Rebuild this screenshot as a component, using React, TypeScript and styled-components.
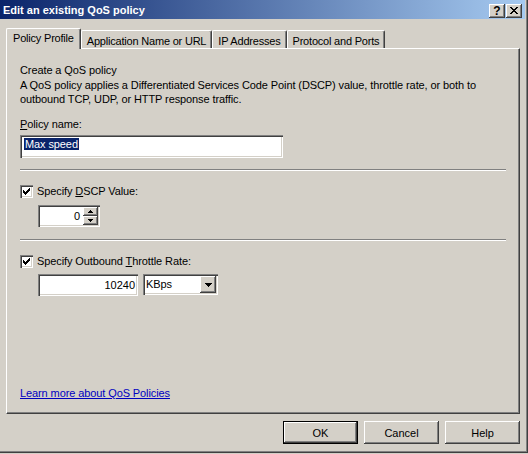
import React from 'react'
import styled, { createGlobalStyle } from 'styled-components'

const GlobalStyle = createGlobalStyle`
  html, body {
    margin: 0;
    padding: 0;
    background: #d4d0c8;
  }
  body {
    font-family: 'Liberation Sans', Arial, sans-serif;
    font-size: 11px;
    color: #000;
  }
`

const raised = `
  box-shadow: inset -1px -1px #404040, inset 1px 1px #ffffff,
    inset -2px -2px #808080, inset 2px 2px #d4d0c8;
`

const sunken = `
  box-shadow: inset 1px 1px #808080, inset 2px 2px #404040,
    inset -1px -1px #ffffff, inset -2px -2px #d4d0c8;
`

const Window = styled.div`
  width: 528px;
  height: 453px;
  box-sizing: border-box;
  padding-right: 3px;
  background: #d4d0c8;
  display: flex;
  flex-direction: column;
  box-shadow: inset -1px -1px #404040, inset -2px -2px #808080;
`

const TitleBar = styled.div`
  height: 19px;
  box-sizing: border-box;
  padding: 2px 3px 0 3px;
  display: flex;
  align-items: center;
  background: linear-gradient(to right, #0a246a, #a6caf0);
`

const Title = styled.div`
  flex: 1;
  color: #fff;
  font-weight: bold;
  line-height: 17px;
`

const CaptionButtons = styled.div`
  display: flex;
  gap: 1px;
`

const CaptionButton = styled.div`
  width: 16px;
  height: 14px;
  display: flex;
  align-items: center;
  justify-content: center;
  background: #d4d0c8;
  font-weight: bold;
  font-size: 12px;
  line-height: 14px;
  ${raised}
`

const Content = styled.div`
  flex: 1;
  display: flex;
  flex-direction: column;
  padding: 9px 5px 0 6px;
`

const TabStrip = styled.div`
  display: flex;
  align-items: flex-end;
  height: 20px;
`

const Tab = styled.div<{ $active?: boolean }>`
  position: relative;
  z-index: ${(p) => (p.$active ? 1 : 0)};
  box-sizing: border-box;
  height: ${(p) => (p.$active ? '21px' : '18px')};
  margin-bottom: ${(p) => (p.$active ? '-1px' : '0')};
  padding: ${(p) => (p.$active ? '2px 6px 0' : '3px 5px 0')};
  line-height: 14px;
  letter-spacing: -0.2px;
  white-space: nowrap;
  background: #d4d0c8;
  border-top: 1px solid #fff;
  border-left: 1px solid #fff;
  border-right: 1px solid #404040;
  border-radius: 2px 2px 0 0;
  box-shadow: inset -1px 0 #808080;
`

const Panel = styled.div`
  flex: 1;
  display: flex;
  flex-direction: column;
  padding: 14px 13px 13px;
  border: 1px solid;
  border-color: #fff #404040 #404040 #fff;
  box-shadow: inset -1px -1px #808080;
  letter-spacing: -0.1px;
`

const Text = styled.div<{ $gap?: number }>`
  line-height: 14px;
  margin-top: ${(p) => p.$gap ?? 0}px;
`

const TextField = styled.div`
  width: 263px;
  height: 23px;
  box-sizing: border-box;
  margin-top: 4px;
  padding: 3px 4px;
  background: #fff;
  line-height: 13px;
  ${sunken}
`

const Selection = styled.span`
  background: #0a246a;
  color: #fff;
  padding: 0 1px;
`

const Separator = styled.div<{ $gap: number }>`
  height: 0;
  margin-top: ${(p) => p.$gap}px;
  border-top: 1px solid #808080;
  border-bottom: 1px solid #fff;
`

const CheckRow = styled.label`
  display: flex;
  align-items: center;
  gap: 4px;
  margin-top: 14px;
  line-height: 13px;
`

const CheckBox = styled.span`
  width: 13px;
  height: 13px;
  box-sizing: border-box;
  display: flex;
  align-items: center;
  justify-content: center;
  background: #fff;
  ${sunken}
`

const Indented = styled.div<{ $gap: number }>`
  display: flex;
  align-items: flex-start;
  gap: 5px;
  margin: ${(p) => p.$gap}px 0 0 18px;
`

const SpinField = styled.div`
  width: 62px;
  height: 22px;
  box-sizing: border-box;
  padding: 2px;
  display: flex;
  background: #fff;
  ${sunken}
`

const FieldValue = styled.div<{ $pad: number }>`
  flex: 1;
  text-align: right;
  padding-right: ${(p) => p.$pad}px;
  line-height: 18px;
  letter-spacing: 0;
`

const SpinButtons = styled.div`
  width: 15px;
  display: flex;
  flex-direction: column;
`

const SpinButton = styled.div`
  flex: 1;
  display: flex;
  align-items: center;
  justify-content: center;
  background: #d4d0c8;
  ${raised}
`

const NumberField = styled.div`
  width: 100px;
  height: 22px;
  box-sizing: border-box;
  padding: 2px;
  display: flex;
  background: #fff;
  ${sunken}
`

const ComboBox = styled.div`
  width: 75px;
  height: 21px;
  box-sizing: border-box;
  padding: 2px;
  display: flex;
  background: #fff;
  ${sunken}
`

const ComboText = styled.div`
  flex: 1;
  padding-left: 1px;
  line-height: 17px;
`

const ComboButton = styled.div`
  width: 16px;
  display: flex;
  align-items: center;
  justify-content: center;
  background: #d4d0c8;
  ${raised}
`

const HelpLink = styled.a`
  margin-top: auto;
  line-height: 14px;
  color: #0000c0;
  text-decoration: underline;
  align-self: flex-start;
  cursor: pointer;
`

const ButtonRow = styled.div`
  display: flex;
  justify-content: flex-end;
  gap: 6px;
  margin: 7px 0 9px;
`

const PushButton = styled.button<{ $default?: boolean }>`
  width: 75px;
  height: 23px;
  box-sizing: border-box;
  padding: 0;
  font: inherit;
  color: #000;
  background: #d4d0c8;
  border: ${(p) => (p.$default ? '1px solid #000' : 'none')};
  ${raised}
`

function Pixels({ rows }: { rows: string[] }) {
  const w = rows[0].length
  const h = rows.length
  const d = rows
    .flatMap((row, y) =>
      row.split('').map((c, x) => (c === '#' ? `M${x} ${y}h1v1h-1z` : ''))
    )
    .join('')
  return (
    <svg width={w} height={h} viewBox={`0 0 ${w} ${h}`} shapeRendering="crispEdges">
      <path d={d} fill="#000" />
    </svg>
  )
}

const checkMark = ['......#', '.....##', '#...###', '##.###.', '#####..', '.###...', '..#....']
const closeMark = ['##....##', '.##..##.', '..####..', '...##...', '..####..', '.##..##.', '##....##']
const upArrow = ['..#..', '.###.', '#####']
const downArrow = ['#####', '.###.', '..#..']
const comboArrow = ['#######', '.#####.', '..###..', '...#...']

export default function App() {
  return (
    <>
      <GlobalStyle />
      <Window>
        <TitleBar>
          <Title>Edit an existing QoS policy</Title>
          <CaptionButtons>
            <CaptionButton>?</CaptionButton>
            <CaptionButton>
              <Pixels rows={closeMark} />
            </CaptionButton>
          </CaptionButtons>
        </TitleBar>
        <Content>
          <TabStrip>
            <Tab $active>Policy Profile</Tab>
            <Tab>Application Name or URL</Tab>
            <Tab>IP Addresses</Tab>
            <Tab>Protocol and Ports</Tab>
          </TabStrip>
          <Panel>
            <Text>Create a QoS policy</Text>
            <Text $gap={1}>
              A QoS policy applies a Differentiated Services Code Point (DSCP) value, throttle
              rate, or both to outbound TCP, UDP, or HTTP response traffic.
            </Text>
            <Text $gap={11}>
              <u>P</u>olicy name:
            </Text>
            <TextField>
              <Selection>Max speed</Selection>
            </TextField>
            <Separator $gap={11} />
            <CheckRow>
              <CheckBox>
                <Pixels rows={checkMark} />
              </CheckBox>
              <span>
                Specify <u>D</u>SCP Value:
              </span>
            </CheckRow>
            <Indented $gap={7}>
              <SpinField>
                <FieldValue $pad={3}>0</FieldValue>
                <SpinButtons>
                  <SpinButton>
                    <Pixels rows={upArrow} />
                  </SpinButton>
                  <SpinButton>
                    <Pixels rows={downArrow} />
                  </SpinButton>
                </SpinButtons>
              </SpinField>
            </Indented>
            <Separator $gap={12} />
            <CheckRow>
              <CheckBox>
                <Pixels rows={checkMark} />
              </CheckBox>
              <span>
                Specify Outbound <u>T</u>hrottle Rate:
              </span>
            </CheckRow>
            <Indented $gap={6}>
              <NumberField>
                <FieldValue $pad={1}>10240</FieldValue>
              </NumberField>
              <ComboBox>
                <ComboText>KBps</ComboText>
                <ComboButton>
                  <Pixels rows={comboArrow} />
                </ComboButton>
              </ComboBox>
            </Indented>
            <HelpLink>Learn more about QoS Policies</HelpLink>
          </Panel>
          <ButtonRow>
            <PushButton $default>OK</PushButton>
            <PushButton>Cancel</PushButton>
            <PushButton>Help</PushButton>
          </ButtonRow>
        </Content>
      </Window>
    </>
  )
}
